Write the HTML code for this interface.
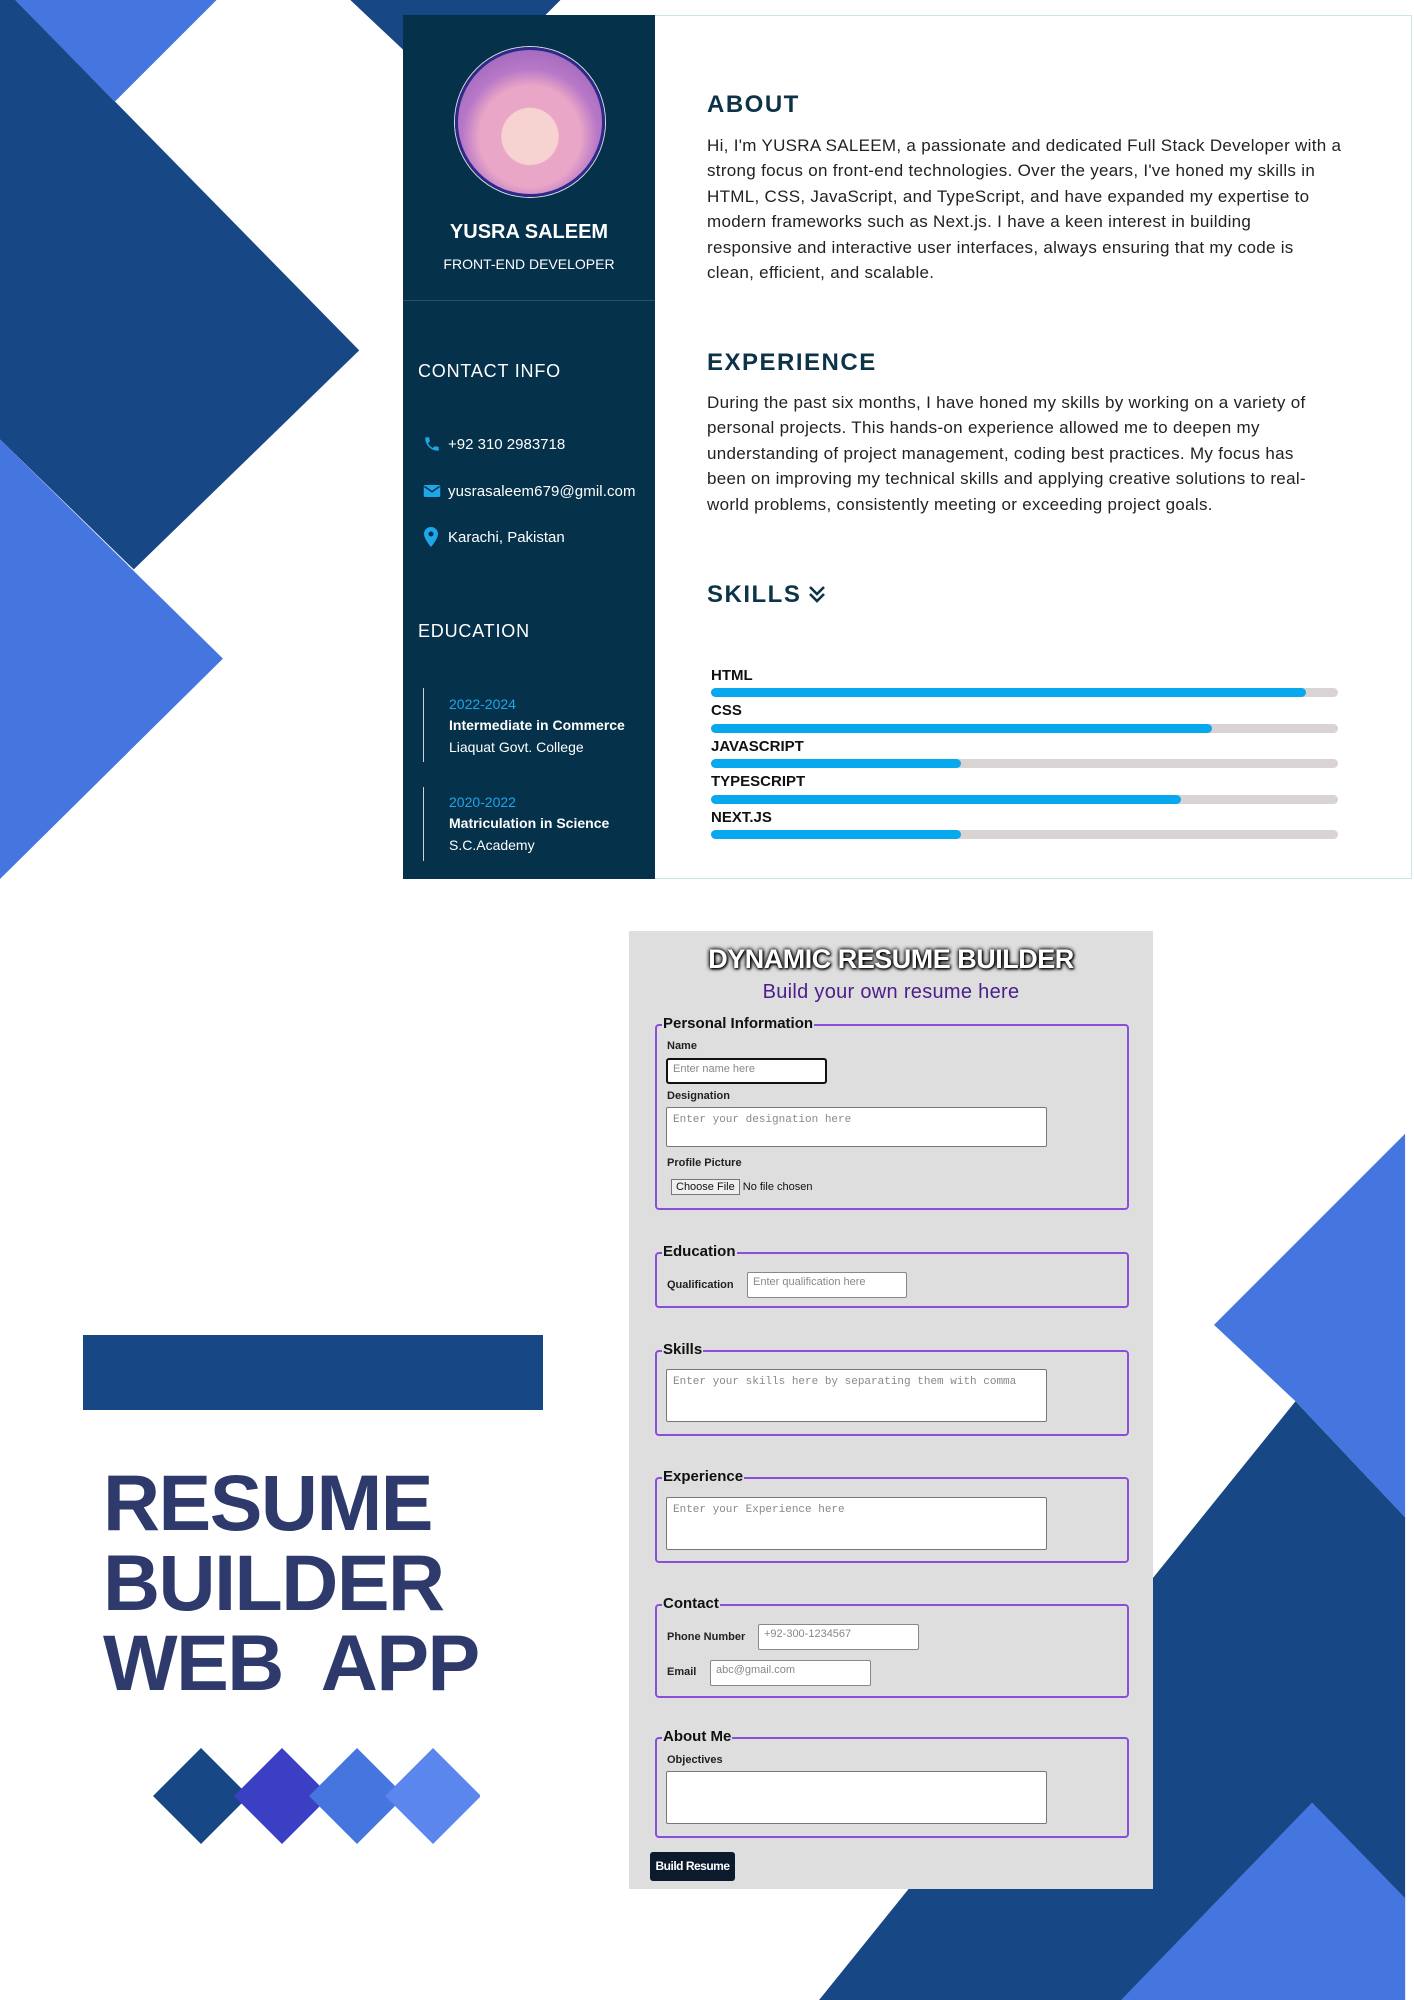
<!DOCTYPE html>
<html><head><meta charset="utf-8"><style>
*{margin:0;padding:0;box-sizing:border-box}
body{width:1414px;height:2000px;position:relative;overflow:hidden;background:#fff;font-family:"Liberation Sans",sans-serif}
.a{position:absolute;white-space:nowrap}
.side{color:#fff}
.h{font-weight:bold;color:#0d3349;letter-spacing:1.5px;font-size:24px}
.p{font-size:17px;letter-spacing:.3px;line-height:25.4px;color:#222}
.sk{font-size:15px;font-weight:bold;color:#111}
.bar{position:absolute;left:711px;width:627px;height:9px;border-radius:5px;background:#d9d3d3}
.bar i{display:block;height:9px;border-radius:5px;background:#08a8ef}
fieldset{position:absolute;left:655px;width:474px;border:2px solid #8a4fd8;border-radius:4px}
.lg{position:absolute;left:662px;font-weight:bold;font-size:15px;color:#111;background:#dedede;padding:0 1px}
.lb{position:absolute;font-weight:bold;font-size:11px;color:#222}
.in{position:absolute;background:#fff;border:1px solid #888;border-radius:2px;font-size:11px;color:#888;padding:3px 5px}
.ta{position:absolute;left:666px;width:381px;background:#fff;border:1px solid #777;border-radius:2px;font-family:"Liberation Mono",monospace;font-size:11px;color:#888;padding:6px 6px}
</style></head><body>
<svg class="a" style="left:0;top:0" width="1414" height="2000" viewBox="0 0 1110 1570" preserveAspectRatio="none">
<polygon points="0,0 12,0 282,275 105,447 0,345" fill="#174785"/>
<polygon points="12,0 170,0 90,80" fill="#4575de"/>
<polygon points="0,345 175,517 0,690" fill="#4575de"/>
<polygon points="275,0 440,0 360,80" fill="#174785"/>
<polygon points="1017,1100 1103,1191 1103,1570 643,1570 780,1400 900,1245" fill="#174785"/>
<polygon points="1103,890 953,1040 1017,1100 1103,1191" fill="#4575de"/>
<polygon points="1030,1415 1103,1490 1103,1570 880,1570" fill="#4575de"/>
</svg>
<div class="a" style="left:403px;top:15px;width:1009px;height:864px;background:#fff;border:1px solid #cfe3ea"></div>
<div class="a" style="left:403px;top:15px;width:252px;height:864px;background:#05314a"></div>
<div class="a" style="left:403px;top:300px;width:252px;height:1px;background:#2a5168"></div>
<div class="a" style="left:455px;top:47px;width:150px;height:150px;border-radius:50%;border:3px solid #2c2a8a;background:radial-gradient(circle at 50% 60%,#f6d3d0 0 25%,#eaa6c6 26% 45%,#b878c8 60%,#8c5ab0 100%);box-shadow:0 0 0 1px #ddd"></div>
<div class="a side" style="left:403px;width:252px;text-align:center;top:221px;font-size:20px;font-weight:bold">YUSRA SALEEM</div>
<div class="a side" style="left:403px;width:252px;text-align:center;top:256px;font-size:14px">FRONT-END DEVELOPER</div>
<div class="a side" style="left:418px;top:361px;font-size:18px;letter-spacing:.8px">CONTACT INFO</div>
<svg class="a" style="left:423px;top:435px" width="18" height="18" viewBox="0 0 24 24"><path fill="#1ea6e8" d="M6.6 10.8c1.4 2.8 3.8 5.1 6.6 6.6l2.2-2.2c.3-.3.7-.4 1-.2 1.1.4 2.3.6 3.6.6.6 0 1 .4 1 1V20c0 .6-.4 1-1 1C10.6 21 3 13.4 3 4c0-.6.4-1 1-1h3.5c.6 0 1 .4 1 1 0 1.3.2 2.5.6 3.6.1.3 0 .7-.2 1z"/></svg>
<div class="a side" style="left:448px;top:436px;font-size:15px">+92 310 2983718</div>
<svg class="a" style="left:423px;top:483px" width="18" height="16" viewBox="0 0 24 20"><rect x="1" y="2" width="22" height="16" rx="2" fill="#1ea6e8"/><path d="M2 4l10 7 10-7" stroke="#05314a" stroke-width="2" fill="none"/></svg>
<div class="a side" style="left:448px;top:483px;font-size:15px;letter-spacing:.1px">yusrasaleem679@gmil.com</div>
<svg class="a" style="left:424px;top:527px" width="14" height="20" viewBox="0 0 14 20"><path fill="#1ea6e8" d="M7 0C3 0 0 3 0 7c0 5 7 13 7 13s7-8 7-13c0-4-3-7-7-7zm0 9.5A2.5 2.5 0 1 1 7 4.5a2.5 2.5 0 0 1 0 5z"/></svg>
<div class="a side" style="left:448px;top:529px;font-size:15px">Karachi, Pakistan</div>
<div class="a side" style="left:418px;top:621px;font-size:18px;letter-spacing:.8px">EDUCATION</div>
<div class="a" style="left:423px;top:688px;width:1px;height:74px;background:#c8d2d8"></div>
<div class="a" style="left:449px;top:696px;font-size:14px;color:#1ea6e8">2022-2024</div>
<div class="a side" style="left:449px;top:717px;font-size:14px;font-weight:bold">Intermediate in Commerce</div>
<div class="a side" style="left:449px;top:739px;font-size:14px">Liaquat Govt. College</div>
<div class="a" style="left:423px;top:787px;width:1px;height:74px;background:#c8d2d8"></div>
<div class="a" style="left:449px;top:794px;font-size:14px;color:#1ea6e8">2020-2022</div>
<div class="a side" style="left:449px;top:815px;font-size:14px;font-weight:bold">Matriculation in Science</div>
<div class="a side" style="left:449px;top:837px;font-size:14px">S.C.Academy</div>
<div class="a h" style="left:707px;top:91px">ABOUT</div>
<div class="a p" style="left:707px;top:133px">Hi, I'm YUSRA SALEEM, a passionate and dedicated Full Stack Developer with a<br>strong focus on front-end technologies. Over the years, I've honed my skills in<br>HTML, CSS, JavaScript, and TypeScript, and have expanded my expertise to<br>modern frameworks such as Next.js. I have a keen interest in building<br>responsive and interactive user interfaces, always ensuring that my code is<br>clean, efficient, and scalable.</div>
<div class="a h" style="left:707px;top:349px">EXPERIENCE</div>
<div class="a p" style="left:707px;top:390px">During the past six months, I have honed my skills by working on a variety of<br>personal projects. This hands-on experience allowed me to deepen my<br>understanding of project management, coding best practices. My focus has<br>been on improving my technical skills and applying creative solutions to real-<br>world problems, consistently meeting or exceeding project goals.</div>
<div class="a h" style="left:707px;top:581px">SKILLS</div>
<svg class="a" style="left:806px;top:583px" width="22" height="22" viewBox="0 0 22 22"><path d="M4 4l7 7 7-7M4 11l7 7 7-7" stroke="#0d3349" stroke-width="2.6" fill="none"/></svg>
<div class="a sk" style="left:711px;top:667px">HTML</div><div class="bar" style="top:688px"><i style="width:595px"></i></div>
<div class="a sk" style="left:711px;top:702px">CSS</div><div class="bar" style="top:724px"><i style="width:501px"></i></div>
<div class="a sk" style="left:711px;top:738px">JAVASCRIPT</div><div class="bar" style="top:759px"><i style="width:250px"></i></div>
<div class="a sk" style="left:711px;top:773px">TYPESCRIPT</div><div class="bar" style="top:795px"><i style="width:470px"></i></div>
<div class="a sk" style="left:711px;top:809px">NEXT.JS</div><div class="bar" style="top:830px"><i style="width:250px"></i></div>
<div class="a" style="left:83px;top:1335px;width:460px;height:75px;background:#174785"></div>
<div class="a" style="left:103px;top:1463px;font-size:79px;font-weight:bold;color:#2d3a6b;line-height:80px;letter-spacing:-1.5px">RESUME<br>BUILDER<br>WEB&nbsp; APP</div>
<svg class="a" style="left:150px;top:1746px" width="330" height="100" viewBox="0 0 330 100">
<polygon points="51,2 99,50 51,98 3,50" fill="#174785"/>
<polygon points="132,2 180,50 132,98 84,50" fill="#3a3fc4"/>
<polygon points="207,2 255,50 207,98 159,50" fill="#4575de"/>
<polygon points="283,2 331,50 283,98 235,50" fill="#5b86ee"/>
</svg>
<div class="a" style="left:629px;top:931px;width:524px;height:958px;background:#dedede"></div>
<div class="a" style="left:629px;width:524px;text-align:center;top:944px;font-size:27px;font-weight:bold;color:#fff;letter-spacing:-.5px;text-shadow:0 0 4px #000,0 0 4px #000,1px 1px 2px #000">DYNAMIC RESUME BUILDER</div>
<div class="a" style="left:629px;width:524px;text-align:center;top:981px;font-size:20px;letter-spacing:.3px;color:#4b1e8a">Build your own resume here</div>
<fieldset style="top:1024px;height:186px"></fieldset><div class="lg" style="top:1015px">Personal Information</div>
<div class="lb" style="left:667px;top:1040px">Name</div>
<div class="in" style="left:666px;top:1058px;width:161px;height:26px;border:2px solid #111;border-radius:3px">Enter name here</div>
<div class="lb" style="left:667px;top:1090px">Designation</div>
<div class="ta" style="top:1107px;height:40px">Enter your designation here</div>
<div class="lb" style="left:667px;top:1157px">Profile Picture</div>
<div class="a" style="left:671px;top:1181px;font-size:11px;color:#111"><span style="border:1px solid #777;background:#efefef;padding:1px 4px">Choose File</span> No file chosen</div>
<fieldset style="top:1252px;height:56px"></fieldset><div class="lg" style="top:1243px">Education</div>
<div class="lb" style="left:667px;top:1279px">Qualification</div>
<div class="in" style="left:747px;top:1272px;width:160px;height:26px">Enter qualification here</div>
<fieldset style="top:1350px;height:86px"></fieldset><div class="lg" style="top:1341px">Skills</div>
<div class="ta" style="top:1369px;height:53px">Enter your skills here by separating them with comma</div>
<fieldset style="top:1477px;height:86px"></fieldset><div class="lg" style="top:1468px">Experience</div>
<div class="ta" style="top:1497px;height:53px">Enter your Experience here</div>
<fieldset style="top:1604px;height:94px"></fieldset><div class="lg" style="top:1595px">Contact</div>
<div class="lb" style="left:667px;top:1631px">Phone Number</div>
<div class="in" style="left:758px;top:1624px;width:161px;height:26px">+92-300-1234567</div>
<div class="lb" style="left:667px;top:1666px">Email</div>
<div class="in" style="left:710px;top:1660px;width:161px;height:26px">abc@gmail.com</div>
<fieldset style="top:1737px;height:101px"></fieldset><div class="lg" style="top:1728px">About Me</div>
<div class="lb" style="left:667px;top:1754px">Objectives</div>
<div class="ta" style="top:1771px;height:53px"></div>
<div class="a" style="left:650px;top:1852px;width:85px;height:29px;background:#0c1a2e;border-radius:3px;color:#fff;font-size:12px;font-weight:bold;text-align:center;line-height:29px;letter-spacing:-.5px">Build Resume</div>
</body></html>
